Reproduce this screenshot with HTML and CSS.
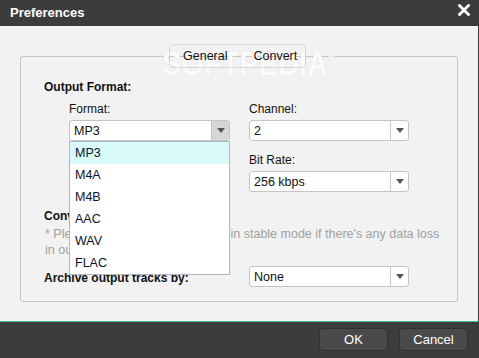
FILE: index.html
```html
<html>
  <head>
    <link rel="stylesheet" href="styles.css">
  </head>
  <body>
    <div class="window">
      <div class="titlebar">
        <span class="title">Preferences</span>
        <button class="btn-close">
          <svg viewBox="0 0 12 12" width="12" height="12">
            <path d="M1.5 1.5 10.5 10.5M10.5 1.5 1.5 10.5" stroke="#fff" stroke-width="2.8" stroke-linecap="square" />
          </svg>
        </button>
      </div>
      <div class="content">
        <div class="group">
          <div class="watermark">SOFTPEDIA<sup>®</sup></div>
          <div class="tabs">
            <span class="tab">General</span>
            <span class="tab">Convert</span>
          </div>

          <div class="heading">Output Format:</div>
          <div class="grid">
            <div class="field">
              <div class="label">Format:</div>
              <div class="select open">
                <span class="value">MP3</span>
                <span class="arrow"></span>
              </div>
              <ul class="dropdown">
                <li class="active">MP3</li>
                <li>M4A</li>
                <li>M4B</li>
                <li>AAC</li>
                <li>WAV</li>
                <li>FLAC</li>
              </ul>
            </div>
            <div class="field">
              <div class="label">Channel:</div>
              <div class="select">
                <span class="value">2</span>
                <span class="arrow"></span>
              </div>
            </div>
            <div class="field">
              <div class="label">Sample Rate:</div>
              <div class="select">
                <span class="value">44100 Hz</span>
                <span class="arrow"></span>
              </div>
            </div>
            <div class="field">
              <div class="label">Bit Rate:</div>
              <div class="select">
                <span class="value">256 kbps</span>
                <span class="arrow"></span>
              </div>
            </div>
          </div>

          <div class="heading heading-conv">Conversion Mode:</div>
          <p class="note">* Please try to convert these files in stable mode if there's any data loss in output files.</p>

          <div class="archive-row">
            <div class="heading">Archive output tracks by:</div>
            <div class="select">
              <span class="value">None</span>
              <span class="arrow"></span>
            </div>
          </div>
        </div>
      </div>
      <div class="footer">
        <button class="btn">OK</button>
        <button class="btn">Cancel</button>
      </div>
    </div>
  </body>
</html>
```

FILE: styles.css
```css
html, body {
  margin: 0;
  padding: 0;
  background-color: #3c3c3c;
  font-family: "Liberation Sans", Arial, sans-serif;
}
.window {
  width: 479px;
  height: 358px;
  display: flex;
  flex-direction: column;
  overflow: hidden;
}
.titlebar {
  height: 26px;
  display: flex;
  align-items: center;
  justify-content: space-between;
  padding: 0 9px 0 10px;
  box-sizing: border-box;
}
.title {
  color: #fff;
  font-weight: bold;
  font-size: 13px;
  margin-top: -2px;
}
.btn-close {
  background: transparent;
  border: none;
  padding: 0;
  margin-top: -6px;
  display: flex;
}
.content {
  margin-right: 1px;
  background-color: #f2f2f2;
  border-bottom: 1px solid #3ec28f;
  padding: 30px 20px 0 20px;
  height: 265px;
}
.group {
  position: relative;
  border: 1px solid #c4c4c4;
  border-radius: 3px;
  padding: 23px 23px 14px 23px;
  height: 207px;
}
.tabs {
  position: absolute;
  top: -13px;
  left: 148px;
  display: flex;
  border: 1px solid rgba(200, 200, 200, 0.7);
  border-radius: 5px;
  height: 22px;
  align-items: center;
  padding: 0 8px 0 13px;
}
.tab {
  font-size: 12.5px;
  color: #111;
  margin-right: 26px;
}
.tab:last-child {
  margin-right: 0;
}
.watermark {
  position: absolute;
  top: -18px;
  left: 141px;
  font-size: 29px;
  line-height: 29px;
  font-weight: bold;
  color: #fbfbfb;
  text-shadow: 0 0 1px #d8d8d8;
  transform: scaleY(1.15);
  transform-origin: left top;
  pointer-events: none;
}
.watermark sup {
  font-size: 9px;
  vertical-align: 14px;
}
.heading {
  font-size: 12px;
  font-weight: bold;
  color: #111;
  line-height: 15px;
}
.grid {
  display: grid;
  grid-template-columns: 161px 160px;
  column-gap: 19px;
  row-gap: 12px;
  margin: 7px 0 0 25px;
}
.field {
  position: relative;
}
.label {
  font-size: 12px;
  color: #111;
  line-height: 15px;
  margin-bottom: 3px;
}
.select {
  height: 21px;
  box-sizing: border-box;
  border: 1px solid #c4c4c4;
  border-radius: 3px;
  background-color: #fff;
  display: flex;
  align-items: center;
}
.select .value {
  flex: 1;
  font-size: 12.5px;
  color: #111;
  padding-left: 4px;
}
.select .arrow {
  width: 17px;
  height: 100%;
  border-left: 1px solid #c8c8c8;
  display: flex;
  align-items: center;
  justify-content: center;
}
.select .arrow::after {
  content: '';
  border-left: 4px solid transparent;
  border-right: 4px solid transparent;
  border-top: 5px solid #555;
}
.select.open .arrow {
  background-color: #d6d6d6;
  border-left-color: #c4c4c4;
  border-radius: 0 2px 2px 0;
}
.dropdown {
  position: absolute;
  top: 39px;
  left: 0;
  width: 161px;
  box-sizing: border-box;
  margin: 0;
  padding: 0;
  list-style: none;
  background-color: #fff;
  border: 1px solid #b4b4c4;
  z-index: 2;
}
.dropdown li {
  height: 22px;
  line-height: 22px;
  font-size: 12.5px;
  color: #10102a;
  padding-left: 5px;
}
.dropdown li.active {
  background-color: #d8fafa;
}
.heading-conv {
  margin-top: 17px;
}
.note {
  margin: 2px -8px 0 0;
  font-size: 12.5px;
  line-height: 16px;
  color: #a0a0a0;
  padding-left: 1px;
}
.archive-row {
  display: flex;
  align-items: center;
  margin-top: 8px;
}
.archive-row .heading {
  width: 205px;
  margin-top: 4px;
}
.archive-row .select {
  width: 160px;
}
.footer {
  flex: 1;
  display: flex;
  justify-content: flex-end;
  align-items: flex-start;
  padding: 6px 11px 0 0;
}
.btn {
  width: 69px;
  height: 23px;
  margin-left: 11px;
  background-color: #4a4a4a;
  border: 1px solid #303030;
  border-radius: 4px;
  color: #fff;
  font-family: "Liberation Sans", Arial, sans-serif;
  font-size: 13px;
  padding: 0;
}
```
